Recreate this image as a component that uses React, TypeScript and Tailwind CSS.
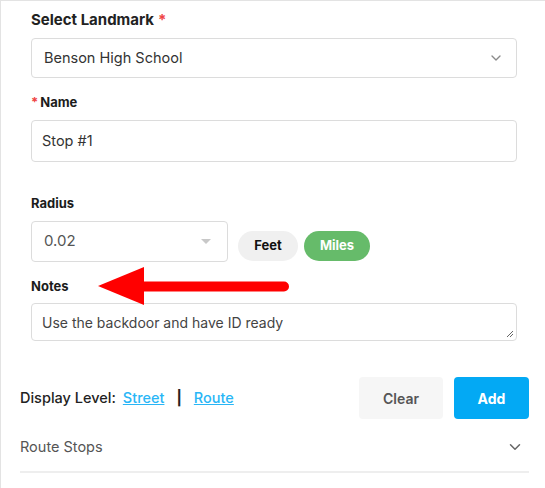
import { ChevronDown } from "lucide-react";

const font = { fontFamily: "Inter, 'Noto Sans', sans-serif" };

function Label({ children, before }: { children: React.ReactNode; before?: boolean }) {
  return (
    <div className="flex h-5 items-center text-[13px] font-bold text-[#1c1c1c]">
      {before && <span className="mr-[2px] text-[#ef4444]">*</span>}
      <span>{children}</span>
    </div>
  );
}

export default function App() {
  return (
    <div className="h-[488px] w-full bg-white" style={font}>
      <div className="relative h-full border-l border-t border-[#e3e3e3] pl-[19px] pr-4 pt-[9px]">
        {/* form fields */}
        <div className="pl-[11px] pr-3">
          <div className="flex h-5 items-center text-[15px] font-bold text-[#222]">
            Select Landmark <span className="ml-1 text-[#ef4444]">*</span>
          </div>
          <div className="mt-2 flex h-10 items-center justify-between rounded border border-[#dcdcdc] pl-3 pr-3 text-[14.5px] text-[#333]">
            <span>Benson High School</span>
            <ChevronDown size={16} strokeWidth={2} className="text-[#8a8a8a]" />
          </div>

          <div className="mt-[15px]">
            <Label before>Name</Label>
          </div>
          <div className="mt-[7px] flex h-[42px] items-center rounded border border-[#dcdcdc] px-[10px] text-[14.5px] text-[#333]">
            Stop #1
          </div>

          <div className="mt-8">
            <Label>Radius</Label>
          </div>
          <div className="mt-[7px] flex items-end gap-[10px]">
            <div className="flex h-[41px] w-[197px] items-center justify-between rounded border border-[#dcdcdc] pl-3 pr-[16px] text-[15px] text-[#555]">
              <span>0.02</span>
              <span className="h-0 w-0 border-x-[5px] border-t-[5px] border-x-transparent border-t-[#c8c8c8]" />
            </div>
            <div className="mb-[1px] flex gap-[6px]">
              <button className="h-[30px] w-[60px] rounded-full bg-[#f0f0f0] text-[13px] font-bold text-[#111]">Feet</button>
              <button className="h-[30px] w-[66px] rounded-full bg-[#66bb6a] text-[13px] font-bold text-white">Miles</button>
            </div>
          </div>

          <div className="mt-[15px]">
            <Label>Notes</Label>
          </div>
          <div className="relative mt-[6px] flex h-[38px] items-center rounded border border-[#dcdcdc] px-[10px] text-[14px] text-[#444]">
            Use the backdoor and have ID ready
            <svg className="absolute bottom-[2px] right-[2px]" width="8" height="8" viewBox="0 0 8 8">
              <path d="M7 1L1 7M7 4L4 7" stroke="#666" strokeWidth="1" />
            </svg>
          </div>
        </div>

        {/* display level + actions */}
        <div className="mt-9 flex items-center justify-between">
          <div className="flex items-center text-[14.5px] text-[#222]">
            <span className="font-medium">Display Level:</span>
            <a className="ml-[7px] font-medium text-[#29b6f6] underline">Street</a>
            <span className="mx-3 font-bold">|</span>
            <a className="font-medium text-[#29b6f6] underline">Route</a>
          </div>
          <div className="flex gap-[11px]">
            <button className="h-[42px] w-[84px] rounded bg-[#f6f6f6] text-[14px] font-semibold text-[#555]">Clear</button>
            <button className="h-[42px] w-[75px] rounded bg-[#03a9f4] text-[14px] font-bold text-white">Add</button>
          </div>
        </div>

        <div className="mt-[18px] flex h-5 items-center justify-between text-[14.5px] text-[#555]">
          <span>Route Stops</span>
          <ChevronDown size={18} strokeWidth={2} className="mr-[5px] text-[#666]" />
        </div>
        <div className="mt-[14px] h-[2px] bg-[#eeeeee]" />

        {/* annotation arrow */}
        <svg className="absolute left-[95px] top-[264px]" width="200" height="44" viewBox="0 0 200 44">
          <polygon points="2,21 48,2 48,40" fill="#ff0000" />
          <line x1="46" y1="21.5" x2="188" y2="21.5" stroke="#ff0000" strokeWidth="10" strokeLinecap="round" />
        </svg>
      </div>
    </div>
  );
}
